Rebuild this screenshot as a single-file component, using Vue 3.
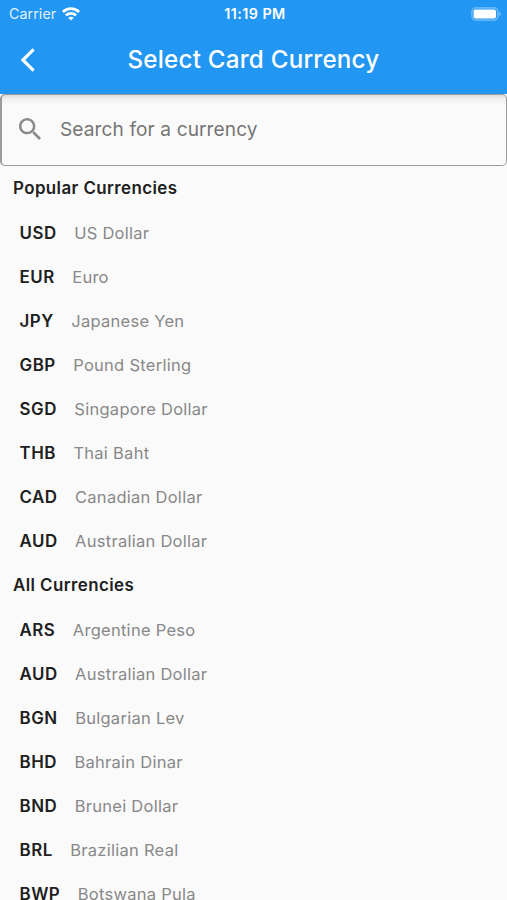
<script setup>
const sections = [
  {
    title: 'Popular Currencies',
    items: [
      ['USD', 'US Dollar'],
      ['EUR', 'Euro'],
      ['JPY', 'Japanese Yen'],
      ['GBP', 'Pound Sterling'],
      ['SGD', 'Singapore Dollar'],
      ['THB', 'Thai Baht'],
      ['CAD', 'Canadian Dollar'],
      ['AUD', 'Australian Dollar'],
    ],
  },
  {
    title: 'All Currencies',
    items: [
      ['ARS', 'Argentine Peso'],
      ['AUD', 'Australian Dollar'],
      ['BGN', 'Bulgarian Lev'],
      ['BHD', 'Bahrain Dinar'],
      ['BND', 'Brunei Dollar'],
      ['BRL', 'Brazilian Real'],
      ['BWP', 'Botswana Pula'],
    ],
  },
]
</script>

<template>
  <div class="screen">
    <header class="app-bar">
      <div class="status">
        <div class="carrier">
          <span>Carrier</span>
          <svg class="wifi" viewBox="0 0 18 14" aria-hidden="true">
            <g fill="none" stroke="#fff" stroke-width="2.7">
              <path d="M0.9 5 C5.4 0.5 12.6 0.5 17.1 5" />
              <path d="M3.9 8.4 C6.8 5.6 11.2 5.6 14.1 8.4" />
            </g>
            <path d="M9 13.6 L6.2 10.8 C7.8 9.3 10.2 9.3 11.8 10.8 Z" fill="#fff" />
          </svg>
        </div>
        <span class="time">11:19 PM</span>
        <svg class="battery" viewBox="0 0 30 14" aria-hidden="true">
          <rect x="0.9" y="0.9" width="26" height="12.2" rx="4" fill="none" stroke="#fff" stroke-opacity="0.32" stroke-width="1.7" />
          <rect x="2.6" y="2.5" width="22.4" height="9" rx="2" fill="#fff" />
          <path d="M28.2 4.8 Q29.8 5.4 29.8 7 Q29.8 8.6 28.2 9.2 Z" fill="#fff" fill-opacity="0.35" />
        </svg>
      </div>
      <div class="nav">
        <svg class="back" viewBox="0 0 16 26" aria-hidden="true">
          <path d="M13.6 2.4 L2.9 13 L13.6 23.6" fill="none" stroke="#fff" stroke-width="3.2" />
        </svg>
        <h1>Select Card Currency</h1>
      </div>
    </header>
    <div class="search">
      <svg class="glass" viewBox="3 3 17.5 17.5" aria-hidden="true">
        <path fill="#8a8a8a" d="M15.5 14h-.79l-.28-.27C15.41 12.59 16 11.11 16 9.5 16 5.91 13.09 3 9.5 3S3 5.91 3 9.5 5.91 16 9.5 16c1.61 0 3.09-.59 4.23-1.57l.27.28v.79l5 4.99L20.49 19l-4.99-5zm-6 0C7.01 14 5 11.99 5 9.5S7.01 5 9.5 5 14 7.01 14 9.5 11.99 14 9.5 14z" />
      </svg>
      <span>Search for a currency</span>
    </div>
    <main>
      <section v-for="section in sections" :key="section.title">
        <h2>{{ section.title }}</h2>
        <div v-for="[code, name] in section.items" :key="code" class="row">
          <span class="code">{{ code }}</span>
          <span class="name">{{ name }}</span>
        </div>
      </section>
    </main>
  </div>
</template>

<style>
body {
  background: #fafafa;
}
</style>

<style scoped>
.screen {
  height: 900px;
  overflow: hidden;
  background: #fafafa;
  font-family: Inter, sans-serif;
  color: #202020;
}
.app-bar {
  height: 94px;
  background: #2196f3;
  color: #fff;
}
.status {
  display: grid;
  grid-template-columns: 1fr auto 1fr;
  align-items: center;
  height: 27px;
  padding: 0 6px 0 9px;
}
.carrier {
  display: flex;
  align-items: center;
  gap: 6px;
  font-size: 14.2px;
  letter-spacing: 0.1px;
  color: #e4f2fe;
}
.wifi {
  width: 18px;
  height: 14px;
}
.time {
  font-size: 14.3px;
  font-weight: 600;
  letter-spacing: 0.45px;
}
.battery {
  width: 30px;
  height: 14px;
  justify-self: end;
}
.nav {
  display: grid;
  grid-template-columns: 40px 1fr 40px;
  align-items: center;
  height: 65px;
  padding: 0 20px;
}
.back {
  width: 16px;
  height: 26px;
}
h1 {
  margin: 0;
  text-align: center;
  font-size: 24.2px;
  font-weight: 500;
  letter-spacing: 0.22px;
  white-space: nowrap;
}
.search {
  display: flex;
  align-items: center;
  gap: 19px;
  height: 72px;
  box-sizing: border-box;
  padding: 0 18px 2px 17px;
  border: 1px solid #9a9a9a;
  border-left-width: 2px;
  border-radius: 5px;
  background: linear-gradient(#dcdcdc, #f1f1f1 4px, #fafafa 10px);
  font-size: 19.1px;
  letter-spacing: 0.1px;
  color: #757575;
}
.glass {
  width: 22px;
  height: 22px;
}
h2 {
  margin: 0;
  height: 45px;
  padding-left: 13px;
  line-height: 45px;
  font-size: 16.9px;
  font-weight: 600;
  letter-spacing: 0.42px;
}
.row {
  display: flex;
  align-items: center;
  gap: 17.5px;
  height: 44px;
  padding-left: 19.5px;
  font-size: 16.5px;
}
.code {
  font-size: 16.9px;
  font-weight: 600;
  letter-spacing: 0.5px;
}
.name {
  letter-spacing: 0.27px;
  color: #888;
}
</style>
